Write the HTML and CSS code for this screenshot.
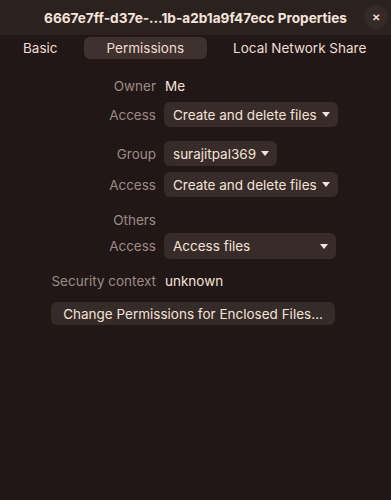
FILE: index.html
```html
<!DOCTYPE html>
<html>
<head>
	<meta charset="UTF-8">
	<title>Properties</title>
	<link rel="stylesheet" href="styles.css">
</head>
<body>

	<div class="window">

		<div class="header">
			<span class="title">6667e7ff-d37e-…1b-a2b1a9f47ecc Properties</span>
			<span class="close">&#x2715;</span>
		</div>

		<div class="tabs">
			<span class="tab">Basic</span>
			<span class="tab active">Permissions</span>
			<span class="tab">Local Network Share</span>
		</div>

		<div class="perm_wrapper">
			<div class="row owner">
				<span class="label">Owner</span>
				<span class="value">Me</span>
			</div>
			<div class="row drop_row near">
				<span class="label">Access</span>
				<span class="drop">Create and delete files <i class="arrow"></i></span>
			</div>

			<div class="row drop_row group">
				<span class="label">Group</span>
				<span class="drop">surajitpal369 <i class="arrow"></i></span>
			</div>
			<div class="row drop_row near">
				<span class="label">Access</span>
				<span class="drop">Create and delete files <i class="arrow"></i></span>
			</div>

			<div class="row others">
				<span class="label">Others</span>
			</div>
			<div class="row drop_row tight">
				<span class="label">Access</span>
				<span class="drop wide">Access files <i class="arrow"></i></span>
			</div>

			<div class="row security">
				<span class="label">Security context</span>
				<span class="value">unknown</span>
			</div>

			<div class="btn_row">
				<span class="button">Change Permissions for Enclosed Files…</span>
			</div>
		</div>

	</div>

</body>
</html>
```

FILE: styles.css
```css
html, body{
	margin: 0;
	padding: 0;
	background: #201716;
}

.window{
	width: 391px;
	height: 500px;
	background: #201716;
	font-family: Inter, "Noto Sans", sans-serif;
	font-size: 13.5px;
	color: #f6e2d8;
}

.header{
	height: 35px;
	background: #2b2220;
	display: flex;
	align-items: center;
	justify-content: center;
	position: relative;
}

.title{
	font-weight: bold;
	font-size: 13.6px;
	color: #f7e4da;
}

.close{
	position: absolute;
	right: 3px;
	top: 5px;
	width: 24px;
	height: 24px;
	border-radius: 50%;
	background: #342a27;
	color: #f8dccf;
	font-size: 10px;
	font-weight: bold;
	display: flex;
	align-items: center;
	justify-content: center;
}

.tabs{
	display: flex;
	gap: 3px;
	margin-top: 2px;
	height: 22px;
	white-space: nowrap;
}

.tab{
	display: flex;
	align-items: center;
	padding: 0 23px;
	border-radius: 6px;
	color: #f1ddd3;
}

.tab.active{
	background: #3f322e;
}

.perm_wrapper{
	display: flex;
	flex-direction: column;
	margin-top: 17px;
}

.row{
	display: flex;
	align-items: center;
	height: 20px;
	white-space: nowrap;
}

.label{
	width: 156px;
	text-align: right;
	color: #9e8b84;
	margin-right: 8px;
}

.value{
	padding-left: 1px;
}

.drop_row{
	height: 25px;
}

.near{
	margin-top: 6px;
}

.group{
	margin-top: 14px;
}

.others{
	margin-top: 13px;
}

.tight{
	margin-top: 3px;
	height: 26px;
}

.security{
	margin-top: 12px;
}

.drop{
	display: flex;
	align-items: center;
	height: 100%;
	padding: 0 8px 0 9px;
	border-radius: 6px;
	background: #372c29;
}

.drop.wide{
	width: 155px;
	justify-content: space-between;
}

.arrow{
	display: inline-block;
	margin-left: 5px;
	width: 0;
	height: 0;
	border-left: 4px solid transparent;
	border-right: 4px solid transparent;
	border-top: 5px solid #f6e2d8;
}

.btn_row{
	margin-top: 11px;
	padding-left: 51px;
}

.button{
	display: flex;
	align-items: center;
	justify-content: center;
	width: 284px;
	height: 23px;
	border-radius: 6px;
	background: #352b28;
}
```
